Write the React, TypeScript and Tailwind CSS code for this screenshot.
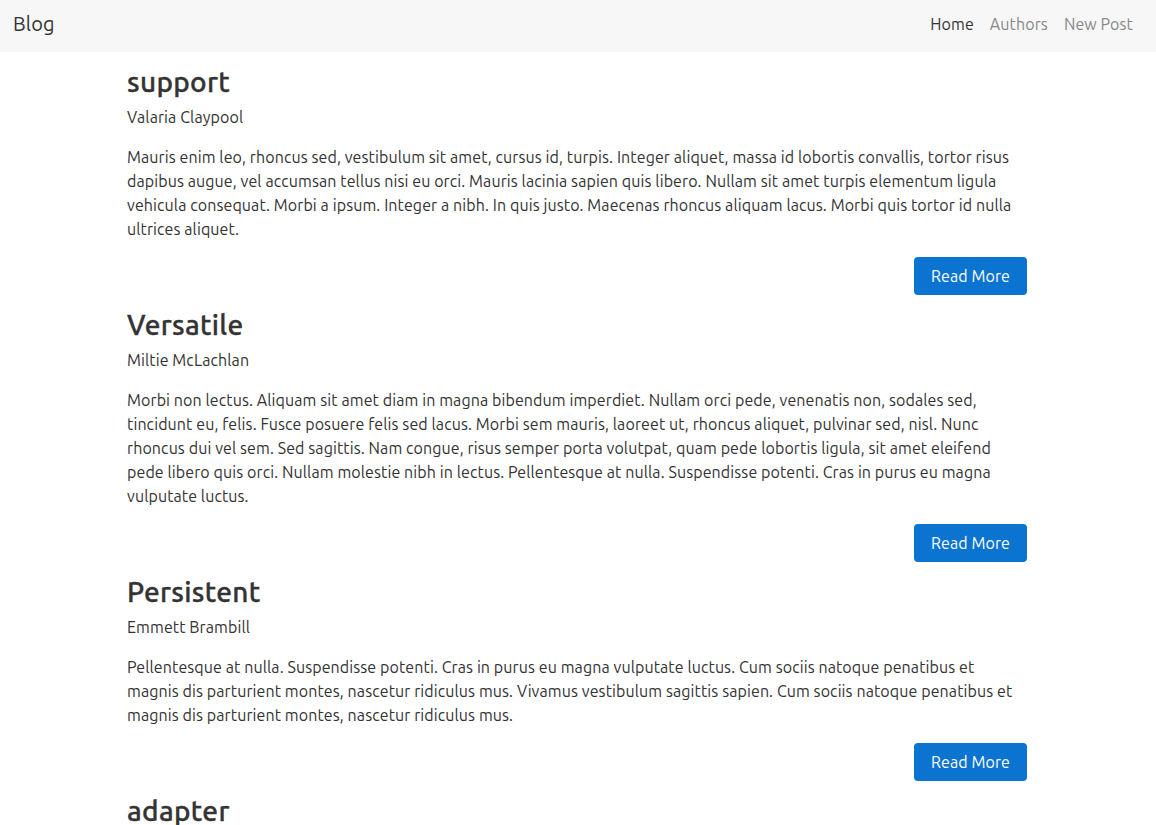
import React from 'react';

interface Post {
  title: string;
  author: string;
  body: string;
}

const posts: Post[] = [
  {
    title: 'support',
    author: 'Valaria Claypool',
    body: 'Mauris enim leo, rhoncus sed, vestibulum sit amet, cursus id, turpis. Integer aliquet, massa id lobortis convallis, tortor risus dapibus augue, vel accumsan tellus nisi eu orci. Mauris lacinia sapien quis libero. Nullam sit amet turpis elementum ligula vehicula consequat. Morbi a ipsum. Integer a nibh. In quis justo. Maecenas rhoncus aliquam lacus. Morbi quis tortor id nulla ultrices aliquet.',
  },
  {
    title: 'Versatile',
    author: 'Miltie McLachlan',
    body: 'Morbi non lectus. Aliquam sit amet diam in magna bibendum imperdiet. Nullam orci pede, venenatis non, sodales sed, tincidunt eu, felis. Fusce posuere felis sed lacus. Morbi sem mauris, laoreet ut, rhoncus aliquet, pulvinar sed, nisl. Nunc rhoncus dui vel sem. Sed sagittis. Nam congue, risus semper porta volutpat, quam pede lobortis ligula, sit amet eleifend pede libero quis orci. Nullam molestie nibh in lectus. Pellentesque at nulla. Suspendisse potenti. Cras in purus eu magna vulputate luctus.',
  },
  {
    title: 'Persistent',
    author: 'Emmett Brambill',
    body: 'Pellentesque at nulla. Suspendisse potenti. Cras in purus eu magna vulputate luctus. Cum sociis natoque penatibus et magnis dis parturient montes, nascetur ridiculus mus. Vivamus vestibulum sagittis sapien. Cum sociis natoque penatibus et magnis dis parturient montes, nascetur ridiculus mus.',
  },
  {
    title: 'adapter',
    author: 'Merrill Gorey',
    body: 'Nulla ut erat id mauris vulputate elementum. Nullam varius. Nulla facilisi. Cras non velit nec nisi vulputate nonummy.',
  },
];

export default function App() {
  return (
    <div
      className="min-h-screen bg-white tracking-[0.1px] text-[#333333]"
      style={{ fontFamily: '"Ubuntu", "Open Sans", sans-serif' }}
    >
      {/* Navbar */}
      <nav className="flex h-[52px] items-center justify-between bg-[#f7f7f7] pb-[4px] pl-[13px] pr-[23px]">
        <span className="text-[20px] text-[#333333]">Blog</span>
        <div className="flex gap-4 text-[16px]">
          <span className="text-[#333333]">Home</span>
          <span className="text-[#888888]">Authors</span>
          <span className="text-[#888888]">New Post</span>
        </div>
      </nav>

      {/* Posts */}
      <div className="ml-[127px] w-[900px]">
        {posts.map(post => (
          <div key={post.title} className="pt-[13px]">
            <h2 className="mb-[6px] text-[28px] font-medium leading-[34px] tracking-[0.3px] [-webkit-text-stroke:0.35px_#333333]">
              {post.title}
            </h2>
            <p className="mb-4 text-[16px] leading-6">{post.author}</p>
            <p className="mb-4 text-[16px] leading-6">{post.body}</p>
            <div className="flex justify-end">
              <button
                type="button"
                className="h-[38px] w-[113px] rounded bg-[#0b74d1] text-[16px] text-white"
              >
                Read More
              </button>
            </div>
          </div>
        ))}
      </div>
    </div>
  );
}
